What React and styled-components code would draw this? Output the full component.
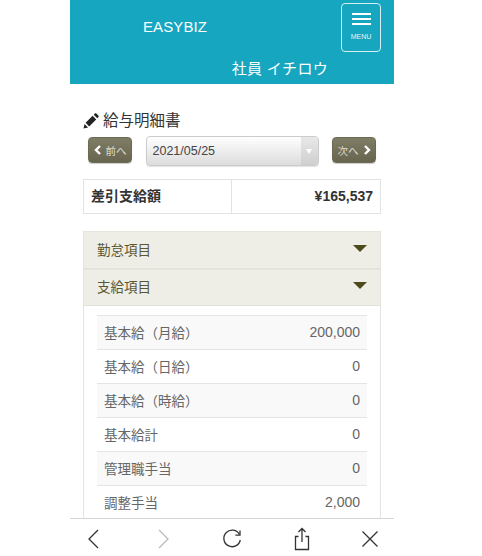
import React from "react";
import styled, { createGlobalStyle } from "styled-components";

const Global = createGlobalStyle`
  html, body { margin: 0; padding: 0; background: #fff; }
  body { font-family: "Liberation Sans", "Noto Sans CJK JP", sans-serif; }
`;
const Phone = styled.div`
  width: 324px; height: 556px; margin-left: 70px;
  display: flex; flex-direction: column; overflow: hidden; background: #fff;
`;
const Scroll = styled.div`flex: 1; min-height: 0; overflow: hidden;`;
const Header = styled.header`
  height: 84px; background: #17a6bf; color: #fff; box-sizing: border-box;
  display: grid; grid-template-columns: 1fr 40px; padding: 3px 13px 0 73px;
`;
const Brand = styled.div`font-size: 15px; line-height: 18px; margin-top: 15px; letter-spacing: .1px;`;
const MenuButton = styled.button`
  width: 40px; height: 49px; box-sizing: border-box; padding: 9px 0 0; background: none; color: #fff;
  border: 1px solid #d4eff4; border-radius: 4px; display: flex; flex-direction: column; align-items: center;
  font-family: inherit;
`;
const Bar = styled.span`width: 19px; height: 2px; background: #fff; margin-bottom: 3px; flex: none;`;
const MenuLabel = styled.span`font-size: 7px; line-height: 8px; margin-top: 5px; color: #e4f5f8;`;
const UserName = styled.div`
  grid-column: 1 / 3; text-align: right; font-size: 15px; line-height: 20px; margin: 2px 53px 0 0; letter-spacing: .3px;
`;
const Content = styled.main`padding: 26px 13px 0; box-sizing: border-box;`;
const Title = styled.h1`
  margin: 0 0 4px; display: flex; align-items: center; gap: 4px; font-weight: 400;
  font-size: 15.5px; line-height: 22px; color: #333; height: 22px;
`;
const Pager = styled.div`
  display: grid; grid-template-columns: 44px 173px 44px; justify-content: space-between; align-items: start;
  padding: 0 5px; margin-bottom: 13px;
`;
const PageButton = styled.button`
  height: 26px; margin-top: 1px; box-sizing: border-box; padding: 0; border: 1px solid #6c6a52; border-radius: 4px;
  background: linear-gradient(#7f7d66, #67654d); color: #dcdbd0; font-size: 10.5px; font-family: inherit;
  display: flex; align-items: center; justify-content: center; gap: 4px;
  box-shadow: 0 1px 1px rgba(0,0,0,.2);
`;
const Select = styled.div`
  height: 30px; box-sizing: border-box; border: 1px solid #ccc; border-radius: 4px; display: flex;
  background: linear-gradient(#fff, #dcdcdc); overflow: hidden; box-shadow: 0 1px 1px rgba(0,0,0,.12);
`;
const SelectText = styled.span`flex: 1; padding-left: 6px; font-size: 12.5px; line-height: 29px; color: #444;`;
const SelectArrow = styled.span`
  width: 17px; background: linear-gradient(#e8e8e8, #cfcfcf); display: flex; align-items: center; justify-content: center;
  &::after { content: ""; border: 3.5px solid transparent; border-top: 5px solid #fff; border-bottom: 0; }
`;
const NetTable = styled.div`
  display: grid; grid-template-columns: 148px 1fr; height: 35px; box-sizing: border-box; border: 1px solid #e3e3e3;
  margin-bottom: 17px; font-size: 14px; font-weight: 700; color: #333; line-height: 33px;
`;
const NetLabel = styled.div`padding-left: 7px; border-right: 1px solid #e3e3e3;`;
const NetValue = styled.div`padding-right: 7px; text-align: right;`;
const Accordion = styled.section`display: flex; flex-direction: column; width: 298px;`;
const AccordionHead = styled.div`
  height: 37.5px; box-sizing: border-box; background: #eeede6; border: 1px solid #e6e5dd; border-bottom-color: #e3e2da;
  display: flex; align-items: center; justify-content: space-between; padding: 0 13px 2px;
  font-size: 13.5px; color: #5a5833;
`;
const Caret = styled.span`
  width: 0; height: 0; border-left: 7px solid transparent; border-right: 7px solid transparent; border-top: 7px solid #4c4a1b;
  margin-top: -1px;
`;
const Panel = styled.div`
  border-left: 1px solid #e3e3e3; border-right: 1px solid #e3e3e3; padding: 9px 13px 0;
`;
const Row = styled.div`
  height: 34px; box-sizing: border-box; border-top: 1px solid #e4e4e4; background: ${p => (p.$odd ? "#f9f9f9" : "#fff")};
  display: flex; justify-content: space-between; align-items: center; padding: 0 7px 2px; font-size: 13.5px; color: #666;
`;
const RowValue = styled.span`font-size: 14px;`;
const Toolbar = styled.nav`
  height: 38px; flex: none; box-sizing: border-box; border-top: 1px solid #d4d4d4; background: #fff;
  display: flex; justify-content: space-between; align-items: center; padding: 2px 14px 0 14px;
`;

const rows = [
  ["基本給（月給）", "200,000"], ["基本給（日給）", "0"], ["基本給（時給）", "0"],
  ["基本給計", "0"], ["管理職手当", "0"], ["調整手当", "2,000"],
];
const Stroke = { fill: "none", stroke: "#333", strokeWidth: 1.3 };
const Chevron = ({ right }) => (
  <svg width="8" height="10" viewBox="0 0 8 10">
    <path d={right ? "M2 1l4 4-4 4" : "M6 1L2 5l4 4"} fill="none" stroke="#fff" strokeWidth="2.4" />
  </svg>
);

export default function App() {
  return (
    <>
      <Global />
      <Phone>
        <Scroll>
          <Header>
            <Brand>EASYBIZ</Brand>
            <MenuButton>
              <Bar /><Bar /><Bar />
              <MenuLabel>MENU</MenuLabel>
            </MenuButton>
            <UserName>社員 イチロウ</UserName>
          </Header>
          <Content>
            <Title>
              <svg width="16" height="16" viewBox="0 0 16 16">
                <path d="M0.5 15.500l1-4.600 3.600 3.600zM2.600 9.800l7-7 3.600 3.600-7 7zM10.700 1.700l1.200-1.200c.4-.4 1-.4 1.400 0l2.200 2.200c.4.4.4 1 0 1.400l-1.200 1.200z" fill="#222" />
              </svg>
              給与明細書
            </Title>
            <Pager>
              <PageButton><Chevron />前へ</PageButton>
              <Select>
                <SelectText>2021/05/25</SelectText>
                <SelectArrow />
              </Select>
              <PageButton>次へ<Chevron right /></PageButton>
            </Pager>
            <NetTable>
              <NetLabel>差引支給額</NetLabel>
              <NetValue>¥165,537</NetValue>
            </NetTable>
            <Accordion>
              <AccordionHead>勤怠項目<Caret /></AccordionHead>
              <AccordionHead>支給項目<Caret /></AccordionHead>
              <Panel>
                {rows.map(([k, v], i) => (
                  <Row key={k} $odd={i % 2 === 0}><span>{k}</span><RowValue>{v}</RowValue></Row>
                ))}
              </Panel>
            </Accordion>
          </Content>
        </Scroll>
        <Toolbar>
          <svg width="20" height="22" viewBox="0 0 20 22"><path d="M14 2L5 11l9 9" {...Stroke} /></svg>
          <svg width="20" height="22" viewBox="0 0 20 22"><path d="M6 2l9 9-9 9" {...Stroke} stroke="#bbb" /></svg>
          <svg width="22" height="22" viewBox="0 0 22 22"><path d="M18.500 6.500A8.300 8.300 0 1 0 19.300 12" {...Stroke} /><path d="M19 2.500v4.600h-4.600" {...Stroke} /></svg>
          <svg width="20" height="24" viewBox="0 0 20 24"><path d="M6.500 9.500H3.500v13h13v-13h-3M10 15V1.500M6.500 5L10 1.500 13.500 5" {...Stroke} /></svg>
          <svg width="20" height="20" viewBox="0 0 20 20"><path d="M2.500 2.500l15 15M17.500 2.500l-15 15" {...Stroke} /></svg>
        </Toolbar>
      </Phone>
    </>
  );
}
